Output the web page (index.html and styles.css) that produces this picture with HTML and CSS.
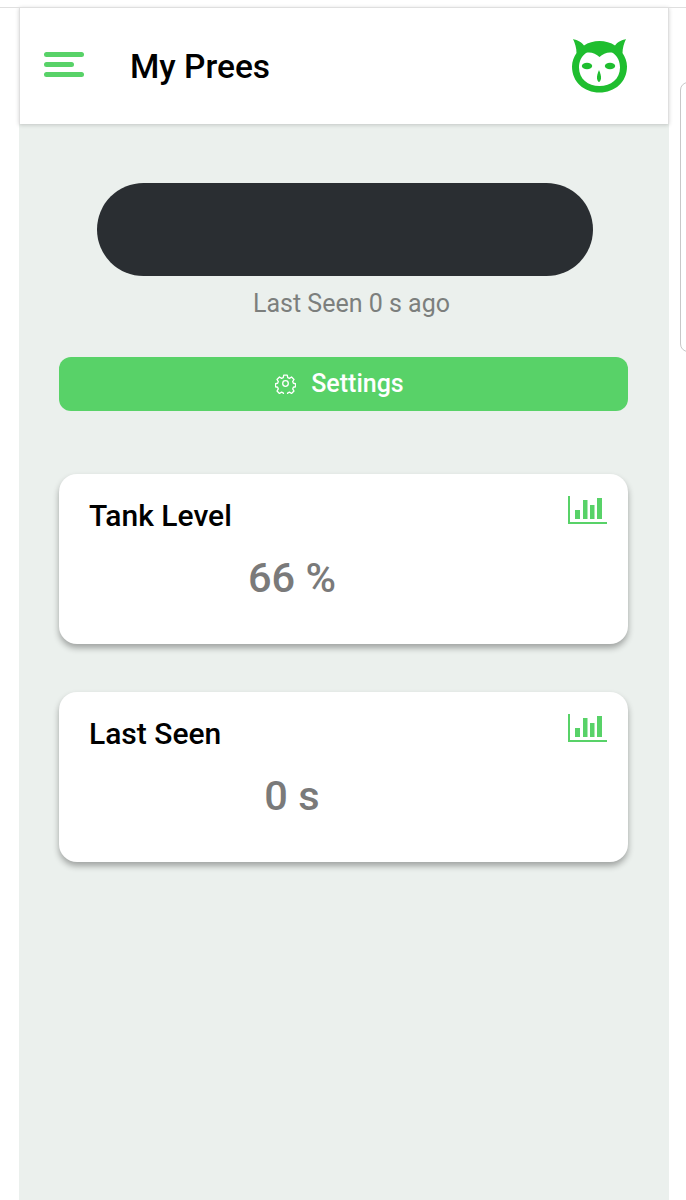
FILE: index.html
```html
<!DOCTYPE html>
<html lang="en">
<head>
  <meta charset="UTF-8">
  <title>My Prees</title>
  <link rel="stylesheet" href="styles.css">
</head>
<body>
  <div class="side-panel"></div>
  <div class="app">
    <header class="topbar">
      <div class="menu-icon"><span></span><span class="short"></span><span></span></div>
      <h1>My Prees</h1>
      <svg class="owl" viewBox="0 0 56 56">
        <path fill="#1fbe2f" d="M1 1 C4 2 9 3 12 7.500 C16 4.500 22 3 27.500 3 C33 3 39 4.500 43 7.500 C46 3 51 2 54 1 C52 5 50.500 10 50.500 15 C53 19 55 23 55 28.500 C55 44 43 54.500 27.500 54.500 C12 54.500 0 44 0 28.500 C0 23 2 19 4.500 15 C4.500 10 3 5 1 1 Z"/>
        <path fill="#fff" d="M27.500 19 C31 15.500 37 13.500 41 15 C46 18.500 48 24 48 29.500 C48 41 39 48 27.500 48 C16 48 7 41 7 29.500 C7 24 9 18.500 14 15 C18 13.500 24 15.500 27.500 19 Z"/>
        <ellipse fill="#1fbe2f" cx="15" cy="28" rx="5.200" ry="3.300"/>
        <ellipse fill="#1fbe2f" cx="38" cy="28" rx="5.200" ry="3.300"/>
        <path fill="#1fbe2f" d="M27 32 C28.300 35 29.300 38 29 40.500 C28.600 42.500 27.800 44 27 44 C26.200 44 25.400 42.500 25 40.500 C24.700 38 25.700 35 27 32 Z"/>
      </svg>
    </header>

    <main class="content">
      <div class="device">
        <div class="device-name"></div>
        <p class="device-seen">Last Seen 0 s ago</p>
      </div>

      <button class="settings-btn">
        <svg class="gear" viewBox="0 0 24 24" fill="none" stroke="#fff" stroke-width="1.500" stroke-linejoin="round">
          <circle cx="12" cy="12" r="3.200"/>
          <path d="M10 2.500h4l.6 2.800 1.900.8 2.400-1.500 2.800 2.800-1.500 2.400.8 1.900 2.500.6v3.400l-2.500.6-.8 1.900 1.500 2.400-2.800 2.800-2.400-1.500-1.900.8-.6 2.300h-4l-.6-2.300-1.900-.8-2.400 1.500-2.800-2.800 1.500-2.400-.8-1.900-2.500-.6v-3.400l2.500-.6.8-1.900-1.500-2.400 2.800-2.800 2.400 1.500 1.900-.8z"/>
        </svg>
        Settings
      </button>

      <section class="card">
        <div class="card-text">
          <h2>Tank Level</h2>
          <div class="card-value">66 %</div>
        </div>
        <svg class="chart" viewBox="0 0 39 30">
          <path fill="none" stroke="#58d268" stroke-width="2" d="M1 1V28H39"/>
          <path fill="#58d268" d="M7 15h5v9H7zM15 5h4.500v19H15zM22 10h4.500v14H22zM29 3h5v21h-5z"/>
        </svg>
      </section>

      <section class="card">
        <div class="card-text">
          <h2>Last Seen</h2>
          <div class="card-value">0 s</div>
        </div>
        <svg class="chart" viewBox="0 0 39 30">
          <path fill="none" stroke="#58d268" stroke-width="2" d="M1 1V28H39"/>
          <path fill="#58d268" d="M7 15h5v9H7zM15 5h4.500v19H15zM22 10h4.500v14H22zM29 3h5v21h-5z"/>
        </svg>
      </section>
    </main>
  </div>
</body>
</html>
```

FILE: styles.css
```css
html, body {
  height: 1200px;
  overflow: hidden;
}
body {
  margin: 0;
  background-color: #fff;
  font-family: Roboto, "Liberation Sans", sans-serif;
  padding-top: 7px;
  box-sizing: border-box;
}
.app {
  margin-left: 19px;
  width: 650px;
  height: 1193px;
  background-color: #ebf0ed;
  box-sizing: border-box;
}
.app::before {
  content: "";
  position: absolute;
  left: 0;
  top: 7px;
  width: 686px;
  height: 1px;
  background-color: #dfdfdf;
}
.topbar {
  display: flex;
  align-items: center;
  height: 117px;
  background-color: #fff;
  box-sizing: border-box;
  padding: 1px 40px 0 24px;
  border-left: 1px solid #dfdfdf;
  border-right: 1px solid #dfdfdf;
  box-shadow: 0 1px 4px rgba(0,0,0,0.18);
}
.menu-icon {
  display: flex;
  flex-direction: column;
  gap: 5px;
  width: 40px;
  margin-top: -4px;
}
.menu-icon span {
  display: block;
  height: 5px;
  border-radius: 3px;
  background-color: #58d268;
}
.menu-icon .short {
  width: 30px;
}
.topbar h1 {
  flex: 1;
  margin: 0 0 0 46px;
  font-size: 33.500px;
  font-weight: 500;
  color: #000;
}
.owl {
  width: 56px;
  height: 56px;
  margin-top: -1px;
}
.content {
  padding: 59px 41px 0 40px;
}
.device {
  text-align: center;
}
.device-name {
  width: 496px;
  height: 93px;
  margin-left: 38px;
  border-radius: 47px;
  background-color: #2a2e32;
}
.device-seen {
  margin: 14px 0 0 0;
  padding-left: 16px;
  font-size: 25px;
  line-height: 28px;
  color: #7c7f7d;
}
.settings-btn {
  display: flex;
  align-items: center;
  justify-content: center;
  gap: 15px;
  width: 100%;
  height: 54px;
  margin-top: 39px;
  padding: 0 8px 2px 0;
  border: none;
  border-radius: 12px;
  background-color: #58d268;
  color: #fff;
  font-family: inherit;
  font-size: 25px;
  font-weight: 500;
}
.gear {
  width: 21px;
  height: 21px;
}
.card {
  display: flex;
  height: 170px;
  margin-top: 48px;
  border-radius: 18px;
  background-color: #fff;
  box-shadow: 0 4px 6px rgba(0,0,0,0.32);
}
.settings-btn + .card {
  margin-top: 63px;
}
.card-text {
  width: 406px;
  margin-left: 30px;
}
.card-text h2 {
  margin: 24px 0 0 0;
  font-size: 30px;
  line-height: 36px;
  font-weight: 500;
  color: #000;
}
.card-value {
  margin-top: 20px;
  text-align: center;
  font-size: 41.500px;
  line-height: 48px;
  font-weight: 500;
  color: #7a7a7a;
}
.chart {
  width: 39px;
  height: 30px;
  margin: 21px 0 0 73px;
}
.side-panel {
  position: absolute;
  left: 680px;
  top: 82px;
  width: 20px;
  height: 270px;
  box-sizing: border-box;
  border: 1px solid #c8c8c8;
  border-radius: 8px;
  background-color: #fff;
}
```
